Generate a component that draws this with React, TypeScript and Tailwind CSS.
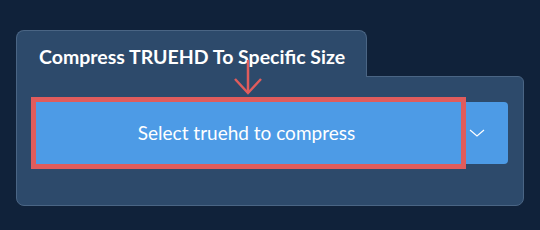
import React from 'react';

const App: React.FC = () => {
  return (
    <div className="relative h-[230px] w-[540px] bg-[#10223a] pt-[30px] pl-[16px] font-['Lato','Liberation_Sans',sans-serif]">
      {/* tab header */}
      <div className="relative z-10 -mb-px flex h-[47px] w-[351px] items-center rounded-t-lg border border-b-0 border-[#4a6584] bg-[#2d4a6b] pl-[22px] pt-[5px]">
        <h2 className="text-[19.5px] font-bold text-white">Compress TRUEHD To Specific Size</h2>
      </div>

      {/* panel */}
      <div className="relative h-[130px] w-[508px] rounded-b-lg rounded-tr-md border border-[#4a6584] bg-[#2d4a6b] px-[15px] pt-[25px]">
        <div className="flex h-[62px] w-[476px] rounded bg-[#4d9be6]">
          <button className="flex w-[429px] items-center justify-center text-[19px] font-normal text-white">
            Select truehd to compress
          </button>
          <div className="flex flex-1 items-center pl-[8px]">
            <svg className="h-[16px] w-[16px]" viewBox="0 0 16 16" fill="none" stroke="white" strokeWidth="1.2">
              <path d="M1 5l7 6 7-6" />
            </svg>
          </div>
        </div>

        {/* highlight box */}
        <div className="absolute left-[14px] top-[20px] h-[72px] w-[435px] border-[5px] border-[#e05c5c]" />
      </div>

      {/* annotation arrow */}
      <svg className="absolute z-20 left-[233px] top-[58px] h-[38px] w-[32px]" viewBox="0 0 32 38" fill="none" stroke="#e05c5c" strokeWidth="2.5">
        <path d="M15 2v33" />
        <path d="M2 21l13 14 13-14" />
      </svg>
    </div>
  );
};

export default App;
